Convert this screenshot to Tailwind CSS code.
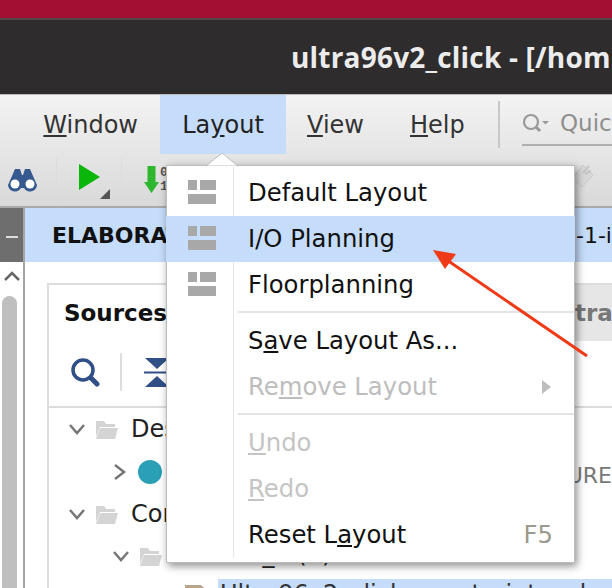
<!doctype html>
<html><head><script src="https://cdn.jsdelivr.net/npm/@tailwindcss/browser@4"></script></head>
<body class="m-0">
<div class="relative w-[612px] h-[588px] overflow-hidden bg-white font-['DejaVu_Sans',sans-serif] text-[24px] text-[#111]">
  <div class="h-[18px] bg-[#a30f33]"></div>
  <div class="h-[76px] bg-[#2e2c2c] border-t-2 border-[#54494a] flex justify-end items-center whitespace-nowrap overflow-hidden">
    <span class="font-['Open_Sans',sans-serif] font-bold text-[28px] tracking-[0.2px] text-[#ececec] w-[321px] shrink-0 pb-[1px]">ultra96v2_click - [/hom</span>
  </div>
  <div class="h-[114px] bg-gradient-to-b from-[#f3f3f3] to-[#d9d9d9] border-t border-[#bbb] border-b-2 border-b-[#a9a9a9]">
    <div class="h-[59px] flex items-center">
      <div class="w-[160px] shrink-0 flex justify-end pr-[22px] text-[#333]"><span><u>W</u>indow</span></div>
      <div class="w-[126px] h-[59px] shrink-0 bg-[#c6dcfb] flex items-center justify-center text-[#222]"><span>La<u>y</u>out</span></div>
      <div class="w-[124px] shrink-0 pl-[21px] text-[#333]"><u>V</u>iew</div>
      <div class="w-[88px] shrink-0 text-[#333]"><u>H</u>elp</div>
      <div class="w-[2px] h-[47px] bg-[#c8c8c8] shrink-0"></div>
      <div class="ml-[22px] h-[42px] flex items-center gap-[11px] border-b-2 border-[#b0b0b0] w-[92px] text-[#8f8f8f] text-[23px] shrink-0 whitespace-nowrap overflow-hidden">
        <svg class="shrink-0" width="27" height="24" viewBox="0 0 27 24"><circle cx="9" cy="10" r="7" fill="none" stroke="#999" stroke-width="2.2"/><path d="M14 15l4 4" stroke="#999" stroke-width="3"/><path d="M20 9h7l-3.500 3.500z" fill="#999"/></svg>
        <span>Quick</span>
      </div>
    </div>
    <div class="flex items-center h-[52px] relative">
      <svg class="ml-[8px] shrink-0" width="29" height="23" viewBox="0 0 29 23"><path d="M4 7L7 0h5l2 6h1l2-6h5l3 7 4 9a7 7 0 0 1-13 3h-3A7 7 0 0 1 0 16z" fill="#36598f"/><circle cx="7" cy="15" r="4.500" fill="#fff"/><circle cx="22" cy="15" r="4.500" fill="#fff"/></svg>
      <div class="w-[1px] h-[44px] bg-[#dcdcdc] ml-[19px]"></div>
      <svg class="ml-[22px] shrink-0 mt-[6px]" width="32" height="38" viewBox="0 0 32 38"><path d="M0 0l21 13L0 26z" fill="#0ab60a"/><path d="M31 25v10H21z" fill="#555"/></svg>
      <div class="w-[1px] h-[44px] bg-[#dcdcdc] ml-[10px]"></div>
      <svg class="ml-[22px] shrink-0" width="15" height="28" viewBox="0 0 15 28"><path d="M3.500 0h8v16h3.500l-7.500 11L0 16h3.500z" fill="#2eb62e"/></svg>
      <div class="ml-[1px] flex flex-col text-[13px] leading-[14px] font-bold text-[#555] font-['Liberation_Mono',monospace]"><span>0</span><span>1</span></div>
      <svg class="absolute left-[570px] top-[10px]" width="24" height="26" viewBox="0 0 24 26"><path d="M13 1l10 10-11 12L3 14z" fill="#d9d9d9" stroke="#c9c9c9"/><path d="M19 2l-6 7M21 7l-6 3" stroke="#c5c5c5" stroke-width="2"/></svg>
    </div>
  </div>
  <div class="flex h-[380px] overflow-hidden">
    <div class="w-[25px] shrink-0 flex flex-col border-r-2 border-[#a5a5a5]">
      <div class="h-[54px] shrink-0 bg-[#6e6e6e] flex items-center justify-center"><div class="w-[12px] h-[2px] mt-[4px] bg-[#ddd]"></div></div>
      <div class="flex-1 pt-[9px] flex flex-col pl-[2px] gap-[2px]">
        <svg class="ml-[2px] shrink-0" width="16" height="10" viewBox="0 0 16 10"><path d="M1 9l7-7 7 7" fill="none" stroke="#666" stroke-width="2.500"/></svg>
        <div class="w-[15px] h-[300px] shrink-0 mt-[13px] rounded-full bg-[#bfbfbf]"></div>
      </div>
    </div>
    <div class="flex-1 flex flex-col min-w-0">
      <div class="h-[54px] shrink-0 bg-[#c6dcfb] flex items-center justify-between font-bold text-[22px] text-[#111] pl-[27px] whitespace-nowrap">
        <span>ELABORATED</span><span class="font-normal">-1-i</span>
      </div>
      <div class="shrink-0 pl-[22px] pt-[21px]">
        <div class="border-l-2 border-t-2 border-[#ddd] flex flex-col">
          <div class="h-[56px] shrink-0 flex justify-between items-center pl-[15px] font-bold text-[23px] whitespace-nowrap overflow-hidden">
            <span>Sources</span><span class="bg-[#e6e6e6] text-[#777] h-[56px] flex items-center w-[38px] pl-[1px]">tra</span>
          </div>
          <div class="h-[67px] shrink-0 flex items-center pl-[22px] pb-[3px] border-b-2 border-[#ddd]">
            <svg width="30" height="29" viewBox="0 0 30 29"><circle cx="12" cy="12" r="10" fill="none" stroke="#2f4f86" stroke-width="3.500"/><path d="M20 20l6 6" stroke="#2f4f86" stroke-width="5" stroke-linecap="round"/></svg>
            <div class="w-[2px] h-[38px] bg-[#ddd] ml-[19px]"></div>
            <svg class="ml-[22px]" width="26" height="29" viewBox="0 0 26 29"><path d="M1 0h24L13 11z M1 29h24L13 18z" fill="#2f4f86"/><path d="M0 14.500h26" stroke="#2f4f86" stroke-width="2"/></svg>
          </div>
          <div class="flex flex-col pl-[19px] text-[24px] text-[#222] whitespace-nowrap">
            <div class="h-[42px] flex items-center gap-[9px]">
              <svg width="18" height="12" viewBox="0 0 18 12"><path d="M2 2l7 8 7-8" fill="none" stroke="#777" stroke-width="2.500"/></svg>
              <svg width="24" height="19" viewBox="0 0 24 19"><path d="M1 1h8l2 3h9v3H5L1 17z M5 8h18l-3 11H1z" fill="#d4d4d4"/></svg>
              <span class="ml-[3px]">Design</span>
            </div>
            <div class="h-[43px] flex items-center pl-[45px] gap-[11px]">
              <svg width="14" height="18" viewBox="0 0 14 18"><path d="M2 2l9 7-9 7" fill="none" stroke="#777" stroke-width="2.500"/></svg>
              <div class="w-[24px] h-[24px] rounded-full bg-[#2a9fb5]"></div>
            </div>
            <div class="h-[42px] flex items-center gap-[9px]">
              <svg width="18" height="12" viewBox="0 0 18 12"><path d="M2 2l7 8 7-8" fill="none" stroke="#777" stroke-width="2.500"/></svg>
              <svg width="24" height="19" viewBox="0 0 24 19"><path d="M1 1h8l2 3h9v3H5L1 17z M5 8h18l-3 11H1z" fill="#d4d4d4"/></svg>
              <span class="ml-[3px]">Constraints</span>
            </div>
            <div class="h-[42px] flex items-center pl-[44px] gap-[9px]">
              <svg width="18" height="12" viewBox="0 0 18 12"><path d="M2 2l7 8 7-8" fill="none" stroke="#777" stroke-width="2.500"/></svg>
              <svg width="24" height="19" viewBox="0 0 24 19"><path d="M1 1h8l2 3h9v3H5L1 17z M5 8h18l-3 11H1z" fill="#d4d4d4"/></svg>
              <span class="ml-[3px] pb-[5px]">constrs_1 (1)</span>
            </div>
            <div class="h-[30px] mt-[2px] flex items-start">
              <svg class="ml-[115px] mt-[5px] shrink-0" width="24" height="19" viewBox="0 0 24 19"><path d="M2 1h16l4 4v14H2z" fill="#b9a58e"/></svg>
              <div class="ml-[11px] flex-1 h-[30px] bg-[#c6dcfb] pl-[2px] pt-[3px] leading-[24px] text-[#333] overflow-hidden">Ultra96v2_click_constraints.xdc</div>
            </div>
          </div>
        </div>
      </div>
    </div>
  </div>
  <div class="absolute right-0 top-[459px] w-[60px] text-right text-[22px] text-[#777]">URE</div>

  <!-- overlays -->
  <div class="absolute left-[166px] top-[165px] w-[409px] h-[398px] bg-white border border-[#bdbdbd] pt-[4px] text-[24.3px] shadow-[2px_3px_8px_rgba(0,0,0,0.45)]">
    <div class="absolute left-[66px] top-0 bottom-[4px] w-[1px] bg-[#e6e6e6]"></div>
    <div class="relative h-[46px] flex items-center pl-[81px]">Default Layout</div>
    <div class="relative h-[46px] flex items-center pl-[82px] bg-[#c6dcfb] -mx-[1px]">I/O Planning</div>
    <div class="relative h-[46px] flex items-center pl-[81px]">Floorplanning</div>
    <div class="relative h-[2px] ml-[71px] mt-[3px] mb-[5px] bg-[#e4e4e4]"></div>
    <div class="relative h-[46px] flex items-center pl-[81px]"><span>S<u>a</u>ve Layout As...</span></div>
    <div class="relative h-[46px] flex items-center justify-between pl-[81px] pr-[23px] text-[#bdbdbd]"><span>Re<u>m</u>ove Layout</span><svg width="9" height="14" viewBox="0 0 9 14"><path d="M0 0l9 7-9 7z" fill="#bdbdbd"/></svg></div>
    <div class="relative h-[2px] ml-[71px] mt-[3px] mb-[5px] bg-[#e4e4e4]"></div>
    <div class="relative h-[46px] flex items-center pl-[81px] text-[#c4c4c4]"><span><u>U</u>ndo</span></div>
    <div class="relative h-[46px] flex items-center pl-[81px] text-[#c4c4c4]"><span><u>R</u>edo</span></div>
    <div class="relative h-[46px] flex items-center justify-between pl-[81px] pr-[21px]"><span>Reset L<u>a</u>yout</span><span class="text-[#9a9a8e]">F5</span></div>
    <svg class="absolute left-[21px] top-[14px]" width="28" height="24" viewBox="0 0 28 24"><path d="M0 0h9v10H0zM12 0h16v10H12zM0 14h28v10H0z" fill="#a8a8a8"/></svg>
    <svg class="absolute left-[21px] top-[60px]" width="28" height="24" viewBox="0 0 28 24"><path d="M0 0h9v10H0zM12 0h16v10H12zM0 14h28v10H0z" fill="#a8a8a8"/></svg>
    <svg class="absolute left-[21px] top-[106px]" width="28" height="24" viewBox="0 0 28 24"><path d="M0 0h9v10H0zM12 0h16v10H12zM0 14h28v10H0z" fill="#a8a8a8"/></svg>
  </div>
  <svg class="absolute left-[206px] top-[152px]" width="32" height="15" viewBox="0 0 32 15"><path d="M0 14L16 1l16 13z" fill="#fff" stroke="#bdbdbd"/><path d="M1 15h30" stroke="#fff" stroke-width="2"/></svg>
  <svg class="absolute left-[430px] top-[245px]" width="160" height="115" viewBox="0 0 160 115"><path d="M157 111L14 13" stroke="#ee3a16" stroke-width="3"/><path d="M3 5l23 4-11 15z" fill="#ee3a16"/></svg>
</div>
</body></html>
